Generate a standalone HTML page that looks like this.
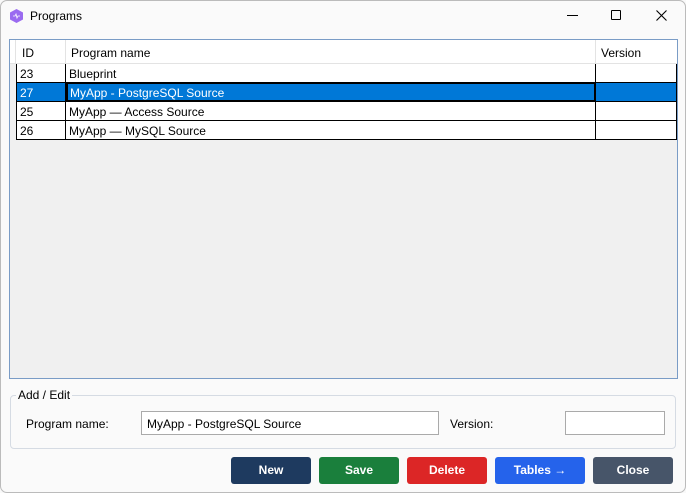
<!DOCTYPE html>
<html><head><style>
*{margin:0;padding:0;box-sizing:border-box}
body{width:686px;height:493px;background:#f9f9f9;font-family:"Liberation Sans","DejaVu Sans",sans-serif;font-size:12px;color:#000;position:relative;overflow:hidden}
.abs{position:absolute}
.win{position:absolute;left:0;top:0;width:686px;height:493px;border:1px solid #bbb;border-radius:7px;background:#fafafa}
.title{position:absolute;left:30px;top:9px;font-size:12px}
.grid{position:absolute;left:9px;top:39px;width:669px;height:340px;border:1px solid #7a9cc6;background:#f0f0f0}
.hdr{position:absolute;top:0;height:24px;background:#fff;border-right:1px solid #e3e3e3;border-bottom:1px solid #e3e3e3;padding:6px 0 0 5px}
.cell{position:absolute;height:19px;border-right:1px solid #000;border-bottom:1px solid #000;background:#fff;padding:3px 0 0 3px}
.sel{background:#0078d7;color:#fff}
.btn{position:absolute;top:457px;height:27px;border-radius:3px;color:#fff;font-weight:bold;text-align:center;line-height:27px;font-size:12px}
</style></head><body>
<div class="win"></div>
<svg class="abs" style="left:10px;top:9px" width="13" height="14" viewBox="0 0 13 14"><polygon points="6.5,0 13,3.5 13,10.5 6.5,14 0,10.5 0,3.5" fill="#9a6bf0"/><path d="M3 7h2l1-2 1 4 1-2h2" stroke="#fff" stroke-width="0.8" fill="none"/></svg>
<div class="title">Programs</div>
<div class="abs" style="left:567px;top:15px;width:11px;height:1px;background:#000"></div>
<div class="abs" style="left:611px;top:10px;width:10px;height:10px;border:1px solid #000;border-radius:1px"></div>
<svg class="abs" style="left:656px;top:10px" width="11" height="11"><path d="M0.5 0.5L10.5 10.5M10.5 0.5L0.5 10.5" stroke="#000" stroke-width="1.1"/></svg>
<div class="grid">
<div class="hdr" style="left:0;width:6px;padding:0"></div>
<div class="hdr" style="left:6px;width:50px;padding-left:6px">ID</div>
<div class="hdr" style="left:56px;width:530px">Program name</div>
<div class="hdr" style="left:586px;width:81px;border-right:none">Version</div>

<div class="cell" style="left:6px;top:24px;width:50px;border-left:1px solid #000">23</div>
<div class="cell" style="left:56px;top:24px;width:530px">Blueprint</div>
<div class="cell" style="left:586px;top:24px;width:81px"></div>

<div class="cell sel" style="left:6px;top:43px;width:50px;border-left:1px solid #000">27</div>
<div class="cell sel" style="left:56px;top:42px;width:530px;height:20px;border:2px solid #000;padding:2px 0 0 2px">MyApp - PostgreSQL Source</div>
<div class="cell sel" style="left:586px;top:43px;width:81px"></div>

<div class="cell" style="left:6px;top:62px;width:50px;border-left:1px solid #000">25</div>
<div class="cell" style="left:56px;top:62px;width:530px">MyApp — Access Source</div>
<div class="cell" style="left:586px;top:62px;width:81px"></div>

<div class="cell" style="left:6px;top:81px;width:50px;border-left:1px solid #000">26</div>
<div class="cell" style="left:56px;top:81px;width:530px">MyApp — MySQL Source</div>
<div class="cell" style="left:586px;top:81px;width:81px"></div>
</div>

<div class="abs" style="left:10px;top:395px;width:666px;height:54px;border:1px solid #d5dbe3;border-radius:4px"></div>
<div class="abs" style="left:16px;top:388px;background:#fafafa;padding:0 2px">Add / Edit</div>
<div class="abs" style="left:26px;top:417px">Program name:</div>
<div class="abs" style="left:141px;top:411px;width:298px;height:24px;border:1px solid #aaa;background:#fff;padding:5px 0 0 5px">MyApp - PostgreSQL Source</div>
<div class="abs" style="left:450px;top:417px">Version:</div>
<div class="abs" style="left:565px;top:411px;width:100px;height:24px;border:1px solid #aaa;background:#fff"></div>

<div class="btn" style="left:231px;width:80px;background:#1e3a5f">New</div>
<div class="btn" style="left:319px;width:80px;background:#1a7f3c">Save</div>
<div class="btn" style="left:407px;width:80px;background:#dc2626">Delete</div>
<div class="btn" style="left:495px;width:90px;background:#2563eb">Tables →</div>
<div class="btn" style="left:593px;width:80px;background:#475569">Close</div>
</body></html>
